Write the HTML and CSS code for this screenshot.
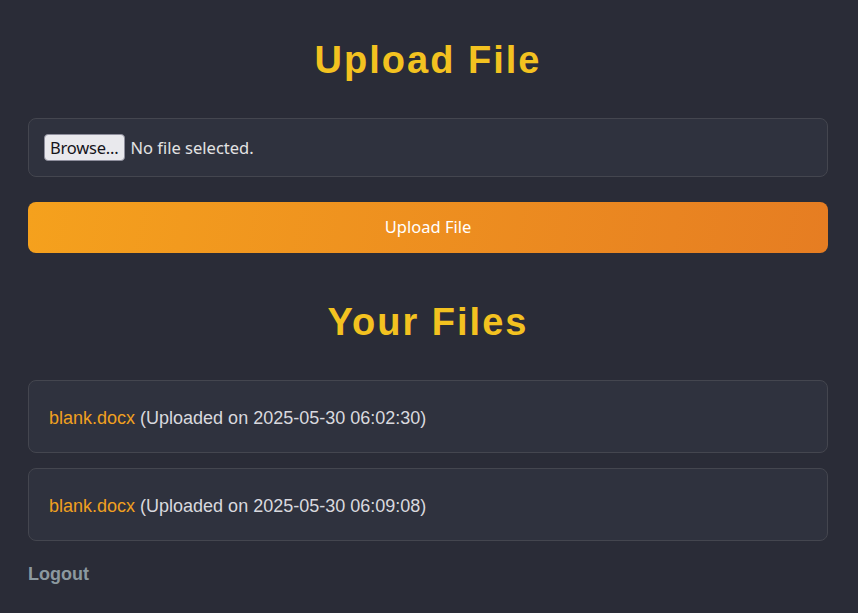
FILE: index.html
```html
<!DOCTYPE html>
<html lang="en">
<head>
<meta charset="utf-8">
<title>Upload File</title>
<link rel="stylesheet" href="styles.css">
</head>
<body>
<main class="page">
  <h1 class="title">Upload File</h1>
  <form class="upload-form">
    <div class="file-box">
      <button type="button" class="browse">Browse...</button>
      <span class="file-status">No file selected.</span>
    </div>
    <button type="button" class="upload-btn">Upload File</button>
  </form>
  <h2 class="title title-files">Your Files</h2>
  <ul class="file-list">
    <li class="file-item"><a class="file-link" href="#">blank.docx</a> (Uploaded on 2025-05-30 06:02:30)</li>
    <li class="file-item"><a class="file-link" href="#">blank.docx</a> (Uploaded on 2025-05-30 06:09:08)</li>
  </ul>
  <a class="logout" href="#">Logout</a>
</main>
</body>
</html>
```
FILE: styles.css
```css
html, body {
  margin: 0;
  padding: 0;
  background: #2a2c37;
}
body {
  font-family: "Liberation Sans", Arial, sans-serif;
  color: #e0e0e0;
}
.page {
  width: 800px;
  margin: 0 0 0 28px;
  padding: 0 0 20px;
  display: flex;
  flex-direction: column;
}
.title {
  margin: 37px 0 0;
  text-align: center;
  color: #f3c220;
  font-size: 38px;
  line-height: 46px;
  font-weight: bold;
  letter-spacing: 2px;
}
.title-files {
  margin-top: 46px;
}
.upload-form {
  margin-top: 35px;
  display: flex;
  flex-direction: column;
  gap: 25px;
}
.file-box {
  height: 59px;
  box-sizing: border-box;
  border: 1px solid #44464f;
  border-radius: 8px;
  background: #2f323e;
  display: flex;
  align-items: center;
  padding: 0 15px;
  gap: 6px;
  font-family: "Noto Sans", "Open Sans", sans-serif;
}
.browse {
  font-family: "Noto Sans", "Open Sans", sans-serif;
  font-size: 16.5px;
  height: 27px;
  padding: 0 5px;
  background: #e9e9ed;
  border: 1px solid #8f8f9d;
  border-radius: 4px;
  color: #15141a;
  letter-spacing: -0.2px;
}
.file-status {
  color: #e3e3e3;
  font-size: 16.5px;
  letter-spacing: 0;
}
.upload-btn {
  height: 51px;
  border: none;
  border-radius: 8px;
  background: linear-gradient(100deg, #f5a11d 0%, #e67d22 100%);
  color: #ffffff;
  font-family: "Noto Sans", "Open Sans", sans-serif;
  font-size: 16.5px;
  padding: 0 0 2px;
}
.file-list {
  list-style: none;
  margin: 35px 0 0;
  padding: 0;
  display: flex;
  flex-direction: column;
  gap: 15px;
}
.file-item {
  box-sizing: border-box;
  height: 73px;
  display: flex;
  align-items: center;
  padding: 3px 20px 0;
  border: 1px solid #44464f;
  border-radius: 8px;
  background: #2f323e;
  font-size: 18px;
  color: #d9d9de;
  white-space: pre;
}
.file-link {
  color: #f0a020;
  text-decoration: none;
}
.logout {
  margin-top: 23px;
  align-self: flex-start;
  color: #8c999f;
  font-weight: bold;
  font-size: 18px;
  text-decoration: none;
}
```
